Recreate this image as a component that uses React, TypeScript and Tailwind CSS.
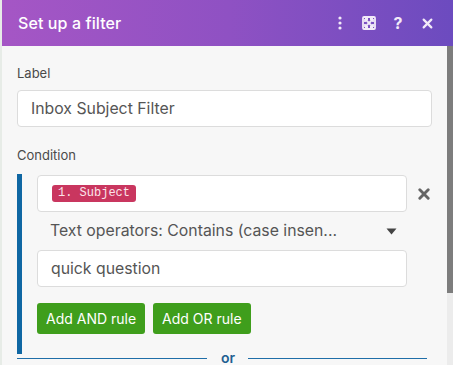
import React from "react"

function KebabIcon() {
  return (
    <svg width="4" height="14" viewBox="0 0 4 14" fill="currentColor">
      <circle cx="2" cy="2" r="1.6" />
      <circle cx="2" cy="7" r="1.6" />
      <circle cx="2" cy="12" r="1.6" />
    </svg>
  )
}

function ExpandIcon() {
  return (
    <svg width="14" height="14" viewBox="0 0 14 14" fill="none" stroke="currentColor" strokeWidth="1.8">
      <rect x="1" y="1" width="12" height="12" rx="1" />
      <path d="M3.5 3.5 L10.5 10.5 M10.5 3.5 L3.5 10.5" />
      <path d="M3 3 h3 M3 3 v3 M11 3 h-3 M11 3 v3 M3 11 h3 M3 11 v-3 M11 11 h-3 M11 11 v-3" />
    </svg>
  )
}

function CloseIcon({ size = 11, width = 2 }: { size?: number; width?: number }) {
  return (
    <svg width={size} height={size} viewBox="0 0 10 10" fill="none" stroke="currentColor" strokeWidth={width} strokeLinecap="round">
      <path d="M1.5 1.5 L8.5 8.5 M8.5 1.5 L1.5 8.5" />
    </svg>
  )
}

export default function App() {
  return (
    <div
      className="flex w-[453px] h-[365px] overflow-hidden bg-[#e7ece7]"
      style={{ fontFamily: "Inter, 'Noto Sans', sans-serif" }}
    >
      {/* left strip */}
      <div className="w-[2px] shrink-0" />

      <div className="flex-1 flex flex-col min-w-0">
        {/* Header */}
        <div className="h-[46px] shrink-0 flex items-center pl-4 pr-[16px] bg-gradient-to-r from-[#a556c5] via-[#8f51c3] to-[#6c4bbf] text-white">
          <div className="text-[16px] font-medium tracking-[0.1px]">Set up a filter</div>
          <div className="ml-auto flex items-center text-[#f2eaf8]">
            <span className="w-[20px] flex justify-center"><KebabIcon /></span>
            <span className="ml-[9px] w-[20px] flex justify-center"><ExpandIcon /></span>
            <span className="ml-[9px] w-[20px] flex justify-center text-[16px] font-bold leading-none">?</span>
            <span className="ml-[9px] w-[20px] flex justify-center"><CloseIcon /></span>
          </div>
        </div>

        <div className="flex-1 flex min-h-0">
          {/* Body */}
          <div className="flex-1 bg-[#f7f7f7] pl-[15px] pr-[15px] pt-[18px] text-[#555]">
            <div className="text-[13px] leading-[18px] text-[#4a4a4a]">Label</div>
            <div className="mt-[8px] h-[37px] bg-white border border-[#dcdcdc] rounded-[4px] flex items-center pl-[13px] text-[15.8px] text-[#555]">
              Inbox Subject Filter
            </div>

            <div className="mt-[19px] text-[13px] leading-[18px] text-[#4a4a4a]">Condition</div>

            <div className="mt-[10px] flex">
              <div className="w-[5px] bg-[#0f67a3] shrink-0" />
              <div className="flex-1 pl-[15px] pt-[1px] pb-[20px]">
                <div className="flex items-center">
                  <div className="w-[370px] h-[37px] bg-white border border-[#dcdcdc] rounded-[4px] flex items-center pl-[14px]">
                    <span
                      className="bg-[#c9365f] text-[#fbe4ea] text-[12px] leading-[17px] px-[6px] rounded-[3px]"
                      style={{ fontFamily: "'Liberation Mono', 'DejaVu Sans Mono', monospace" }}
                    >
                      1. Subject
                    </span>
                  </div>
                  <span className="ml-[11px] text-[#666]"><CloseIcon size={12} width={2.4} /></span>
                </div>

                <div className="w-[370px] h-[38px] flex items-center pl-[13px] pr-[10px] text-[15.8px] text-[#555]">
                  <span>Text operators: Contains (case insen...</span>
                  <svg className="ml-auto" width="11" height="7" viewBox="0 0 11 7" fill="#444">
                    <path d="M0.5 0.5 H10.5 L5.5 6.5 Z" />
                  </svg>
                </div>

                <div className="w-[370px] h-[37px] bg-white border border-[#dcdcdc] rounded-[4px] flex items-center pl-[13px] text-[15.8px] text-[#555]">
                  quick question
                </div>

                <div className="mt-[16px] flex gap-[8px]">
                  <button className="h-[31px] px-[9px] bg-[#3f9e1c] text-white text-[14px] font-normal rounded-[3px]">
                    Add AND rule
                  </button>
                  <button className="h-[31px] px-[9px] bg-[#3f9e1c] text-white text-[14px] font-normal rounded-[3px]">
                    Add OR rule
                  </button>
                </div>
              </div>
            </div>

            <div className="-mt-[3px] mr-[5px] flex items-center">
              <div className="w-[190px] h-px bg-[#1f6ea8]" />
              <span className="ml-[14px] text-[14px] font-semibold text-[#1f5f92] leading-none">or</span>
              <div className="ml-[13px] flex-1 h-px bg-[#1f6ea8]" />
            </div>
          </div>

          {/* Scrollbar */}
          <div className="w-[6px] shrink-0 flex flex-col bg-[#ececec]">
            <div className="h-[247px] bg-[#7d7d7d]" />
          </div>
        </div>
      </div>
    </div>
  )
}
